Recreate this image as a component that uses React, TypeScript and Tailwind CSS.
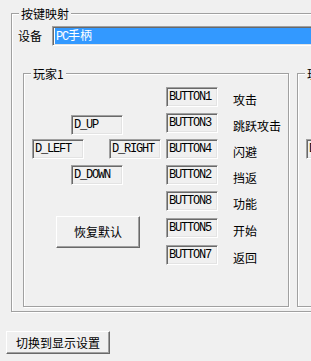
import React from 'react';

const cjk = "font-['Noto_Sans_CJK_SC','Noto_Sans_CJK_TC',sans-serif]";

// sunken read-only edit box, classic Windows look
const Field = ({ text, className = '' }: { text: string; className?: string }) => (
  <div
    className={`w-[52px] h-[20px] shrink-0 bg-[#f0f0f0] border border-t-[#a0a0a0] border-l-[#a0a0a0] border-b-white border-r-white shadow-[inset_1px_1px_0_#696969,inset_-1px_-1px_0_#e3e3e3] pl-[2px] pt-[2px] font-['Liberation_Mono',monospace] text-[12px] leading-[14px] tracking-[-1.2px] text-black whitespace-nowrap overflow-hidden ${className}`}
  >
    {text}
  </div>
);

const RaisedButton = ({ label, className = '' }: { label: string; className?: string }) => (
  <button
    className={`flex items-center justify-center bg-[#f0f0f0] border border-t-white border-l-white border-b-[#696969] border-r-[#696969] shadow-[inset_-1px_-1px_0_#a0a0a0] text-[12px] leading-[14px] text-black ${className}`}
  >
    {label}
  </button>
);

const mappings = [
  { key: 'BUTTON1', action: '攻击', extra: '' },
  { key: 'BUTTON3', action: '跳跃攻击', extra: '' },
  { key: 'BUTTON4', action: '闪避', extra: '' },
  { key: 'BUTTON2', action: '挡返', extra: '' },
  { key: 'BUTTON8', action: '功能', extra: '' },
  { key: 'BUTTON5', action: '开始', extra: 'mt-[1px]' },
  { key: 'BUTTON7', action: '返回', extra: 'mt-[1px]' },
];

const PlayerGroup = ({ title, className = '' }: { title: string; className?: string }) => (
  <fieldset
    className={`w-[266px] h-[241px] shrink-0 border border-[#a0a0a0] shadow-[inset_1px_1px_0_#fff,1px_1px_0_#fff] pl-[6px] ${className}`}
  >
    <legend className="ml-[1px] px-[2px] bg-[#f0f0f0] text-[12px] leading-[15px]">{title}</legend>
    <div className="flex">
      {/* d-pad + reset */}
      <div className="w-[136px] shrink-0 flex flex-col pt-[34px]">
        <Field text="D_UP" className="ml-[41px]" />
        <div className="flex mt-[4px]">
          <Field text="D_LEFT" className="ml-[2px]" />
          <Field text="D_RIGHT" className="ml-[25px]" />
        </div>
        <Field text="D_DOWN" className="ml-[41px] mt-[6px]" />
        <RaisedButton label="恢复默认" className="ml-[26px] mt-[31px] w-[84px] h-[32px]" />
      </div>

      {/* button bindings */}
      <div className="flex flex-col gap-[6px] pt-[6px]">
        {mappings.map(m => (
          <div key={m.key} className={`flex items-start h-[20px] ${m.extra}`}>
            <Field text={m.key} />
            <span className="ml-[15px] pt-[5px] text-[12px] leading-[15px] whitespace-nowrap">{m.action}</span>
          </div>
        ))}
      </div>
    </div>
  </fieldset>
);

export default function App() {
  return (
    <div className={`w-[311px] h-[361px] overflow-hidden bg-[#f0f0f0] text-black pt-[6px] ${cjk}`}>
      <fieldset className="ml-[11px] w-[620px] border border-[#a0a0a0] shadow-[inset_1px_1px_0_#fff,1px_1px_0_#fff] pl-[6px] pt-[5px] pb-[4px]">
        <legend className="ml-[1px] px-[2px] bg-[#f0f0f0] text-[12px] leading-[15px]">按键映射</legend>

        <div className="flex items-center">
          <span className="w-[34px] shrink-0 text-[12px] leading-[14px]">设备</span>
          <div className="w-[300px] h-[20px] bg-white p-[1px] border border-t-[#a0a0a0] border-l-[#a0a0a0] border-b-white border-r-white shadow-[inset_1px_1px_0_#696969,inset_-1px_-1px_0_#e3e3e3]">
            <div className="h-full ml-[1px] bg-[#3399ff] text-white text-[12px] leading-[14px] pl-[1px] whitespace-nowrap">
              <span className="font-['Liberation_Mono',monospace] tracking-[-1.2px]">PC</span>手柄
            </div>
          </div>
        </div>

        <div className="flex mt-[20px] ml-[5px]">
          <PlayerGroup title="玩家1" />
          <PlayerGroup title="玩家2" className="ml-[8px]" />
        </div>
      </fieldset>

      <RaisedButton label="切换到显示设置" className="ml-[6px] mt-[19px] w-[104px] h-[23px]" />
    </div>
  );
}
